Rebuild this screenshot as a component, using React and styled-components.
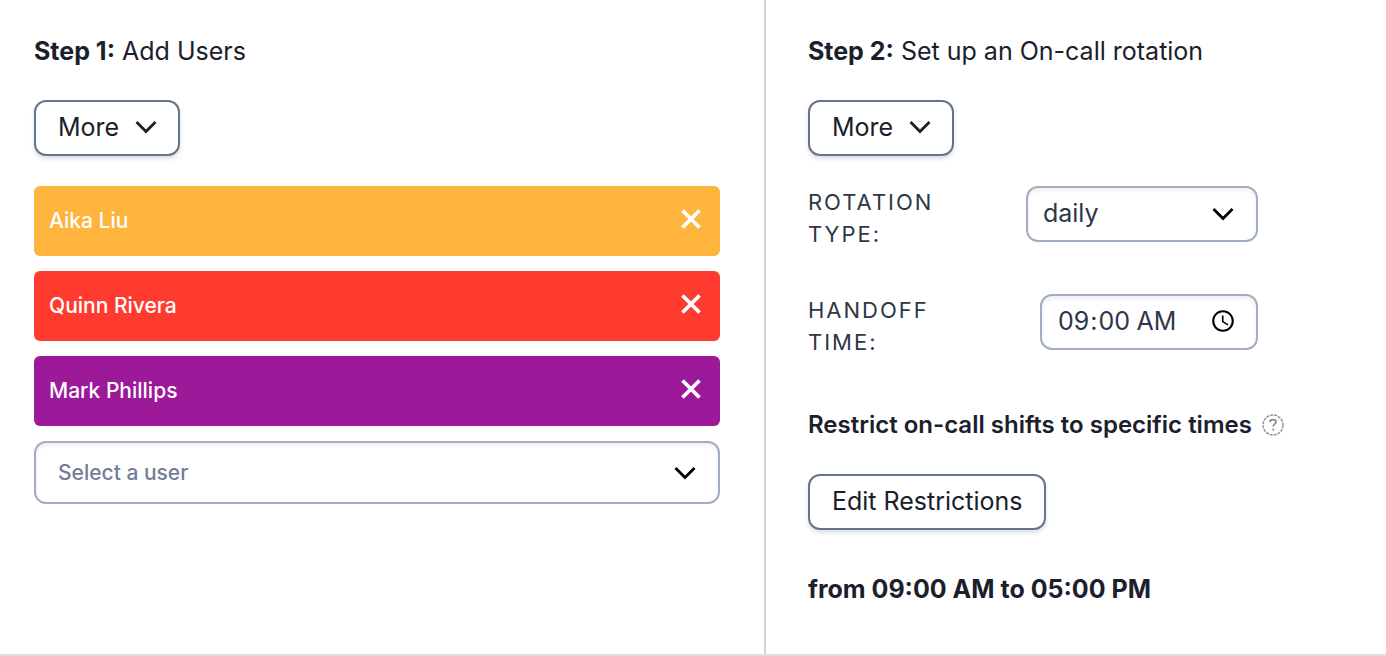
import { useState } from "react";
import styled, { createGlobalStyle } from "styled-components";

const initialUsers = [
  { name: "Aika Liu", color: "#ffb43d" },
  { name: "Quinn Rivera", color: "#ff3a2f" },
  { name: "Mark Phillips", color: "#9c1999" },
];

const Chevron = () => (
  <svg width="22" height="14" viewBox="0 0 22 14" fill="none" aria-hidden="true">
    <path d="M1.5 2L11 11.5L20.5 2" stroke="currentColor" strokeWidth="2.8" />
  </svg>
);

const Close = () => (
  <svg width="20" height="20" viewBox="0 0 20 20" fill="none" aria-hidden="true">
    <path d="M1.5 1.5L18.5 18.5M18.5 1.5L1.5 18.5" stroke="currentColor" strokeWidth="3.8" />
  </svg>
);

const Help = () => (
  <svg width="22" height="22" viewBox="0 0 22 22" fill="none" aria-hidden="true">
    <circle cx="11" cy="11" r="10" stroke="#8a8f98" strokeWidth="1.4" strokeDasharray="3 1" />
    <path
      d="M8 8C8 6.2 9.3 5.6 11 5.6S14 6.6 14 8C14 9.8 11.2 10 11.2 12.6M11.2 14.4V16.4"
      stroke="#8a8f98"
      strokeWidth="1.8"
    />
  </svg>
);

const App = () => {
  const [users, setUsers] = useState(initialUsers);
  const [rotation, setRotation] = useState("daily");
  const [handoff, setHandoff] = useState("09:00");

  const removeUser = (name) => {
    setUsers(users.filter((user) => user.name !== name));
  };

  return (
    <>
      <GlobalStyle />
      <Container>
        <Step>
          <Title>
            <strong>Step 1:</strong> Add Users
          </Title>
          <Button type="button">
            More <Chevron />
          </Button>
          <Users>
            {users.map((user) => (
              <User key={user.name} $color={user.color}>
                {user.name}
                <Remove
                  type="button"
                  aria-label={`Remove ${user.name}`}
                  onClick={() => removeUser(user.name)}
                >
                  <Close />
                </Remove>
              </User>
            ))}
            <SelectBox>
              <UserSelect aria-label="Select a user" defaultValue="">
                <option value="">Select a user</option>
              </UserSelect>
              <Chevron />
            </SelectBox>
          </Users>
        </Step>
        <Step>
          <Title>
            <strong>Step 2:</strong> Set up an On-call rotation
          </Title>
          <Button type="button">
            More <Chevron />
          </Button>
          <Fields>
            <Field>
              <Label htmlFor="rotation">Rotation type:</Label>
              <SelectBox>
                <Select
                  id="rotation"
                  value={rotation}
                  onChange={(e) => setRotation(e.target.value)}
                >
                  <option value="daily">daily</option>
                  <option value="weekly">weekly</option>
                </Select>
                <Chevron />
              </SelectBox>
            </Field>
            <Field>
              <Label htmlFor="handoff">Handoff time:</Label>
              <TimeInput
                id="handoff"
                type="time"
                value={handoff}
                onChange={(e) => setHandoff(e.target.value)}
              />
            </Field>
          </Fields>
          <Subtitle>
            Restrict on-call shifts to specific times <Help />
          </Subtitle>
          <Button type="button">Edit Restrictions</Button>
          <Summary>from 09:00 AM to 05:00 PM</Summary>
        </Step>
      </Container>
    </>
  );
};

export default App;

const GlobalStyle = createGlobalStyle`
  * {
    box-sizing: border-box;
  }

  body {
    margin: 0;
    background: #fff;
    color: #1a202c;
    font-family: Inter, "Liberation Sans", sans-serif;
    font-size: 25px;
    line-height: 38px;
  }

  button,
  input,
  select {
    font: inherit;
  }
`;

const Container = styled.main`
  display: grid;
  grid-template-columns: 21fr 17fr;
  border-bottom: 2px solid #dddddd;

  @media (max-width: 900px) {
    grid-template-columns: 1fr;
  }
`;

const Step = styled.section`
  padding: 32px 44px 46px 34px;

  & + & {
    padding-left: 42px;
  }

  &:first-child {
    border-right: 2px solid #cbd5e0;
  }
`;

const Title = styled.h2`
  margin: 0 0 30px;
  font-size: 25px;
  font-weight: 400;

  strong {
    font-weight: 700;
  }
`;

const Button = styled.button`
  display: flex;
  align-items: center;
  gap: 16px;
  height: 56px;
  padding: 0 21px 2px 22px;
  border: 2px solid #64748b;
  border-radius: 12px;
  background: #fff;
  color: #1a202c;
  box-shadow: 0 3px 4px rgba(0, 0, 0, 0.12);
  cursor: pointer;
`;

const Users = styled.div`
  display: flex;
  flex-direction: column;
  gap: 15px;
  margin-top: 30px;
`;

const User = styled.div`
  display: flex;
  align-items: center;
  justify-content: space-between;
  height: 70px;
  padding: 0 15px;
  border-radius: 6px;
  background: ${(props) => props.$color};
  color: #fff;
  font-size: 21px;
  font-weight: 500;
`;

const Remove = styled.button`
  display: flex;
  padding: 4px 4px 8px;
  border: 0;
  background: transparent;
  color: #fff;
  cursor: pointer;
`;

const SelectBox = styled.div`
  position: relative;

  svg {
    position: absolute;
    top: 50%;
    right: 24px;
    transform: translateY(-50%);
    color: #000;
    pointer-events: none;
  }
`;

const Select = styled.select`
  display: block;
  width: 232px;
  height: 56px;
  padding: 0 56px 2px 15px;
  border: 2px solid #a0aec0;
  border-radius: 12px;
  background: #fff;
  color: #2d3748;
  box-shadow: inset 0 3px 4px rgba(0, 0, 0, 0.06);
  appearance: none;
`;

const UserSelect = styled(Select)`
  width: 100%;
  height: 63px;
  padding: 0 56px 0 22px;
  color: #718096;
  font-size: 21px;
  font-weight: 500;
`;

const Fields = styled.div`
  display: flex;
  flex-direction: column;
  gap: 44px;
  max-width: 450px;
  margin: 30px 0 48px;
`;

const Field = styled.div`
  display: flex;
  align-items: flex-start;
  justify-content: space-between;
`;

const Label = styled.label`
  width: 140px;
  color: #2d3748;
  font-size: 22px;
  line-height: 32px;
  letter-spacing: 2px;
  text-transform: uppercase;
`;

const TimeInput = styled.input`
  width: 218px;
  height: 56px;
  padding: 0 17px 2px 15px;
  border: 2px solid #a0aec0;
  border-radius: 12px;
  background: #fff;
  color: #2d3748;
  box-shadow: inset 0 3px 4px rgba(0, 0, 0, 0.06);
`;

const Subtitle = styled.h3`
  display: flex;
  align-items: center;
  gap: 10px;
  margin: 0 0 30px;
  font-size: 24px;
  font-weight: 600;
`;

const Summary = styled.p`
  margin: 40px 0 0;
  font-weight: 700;
`;
